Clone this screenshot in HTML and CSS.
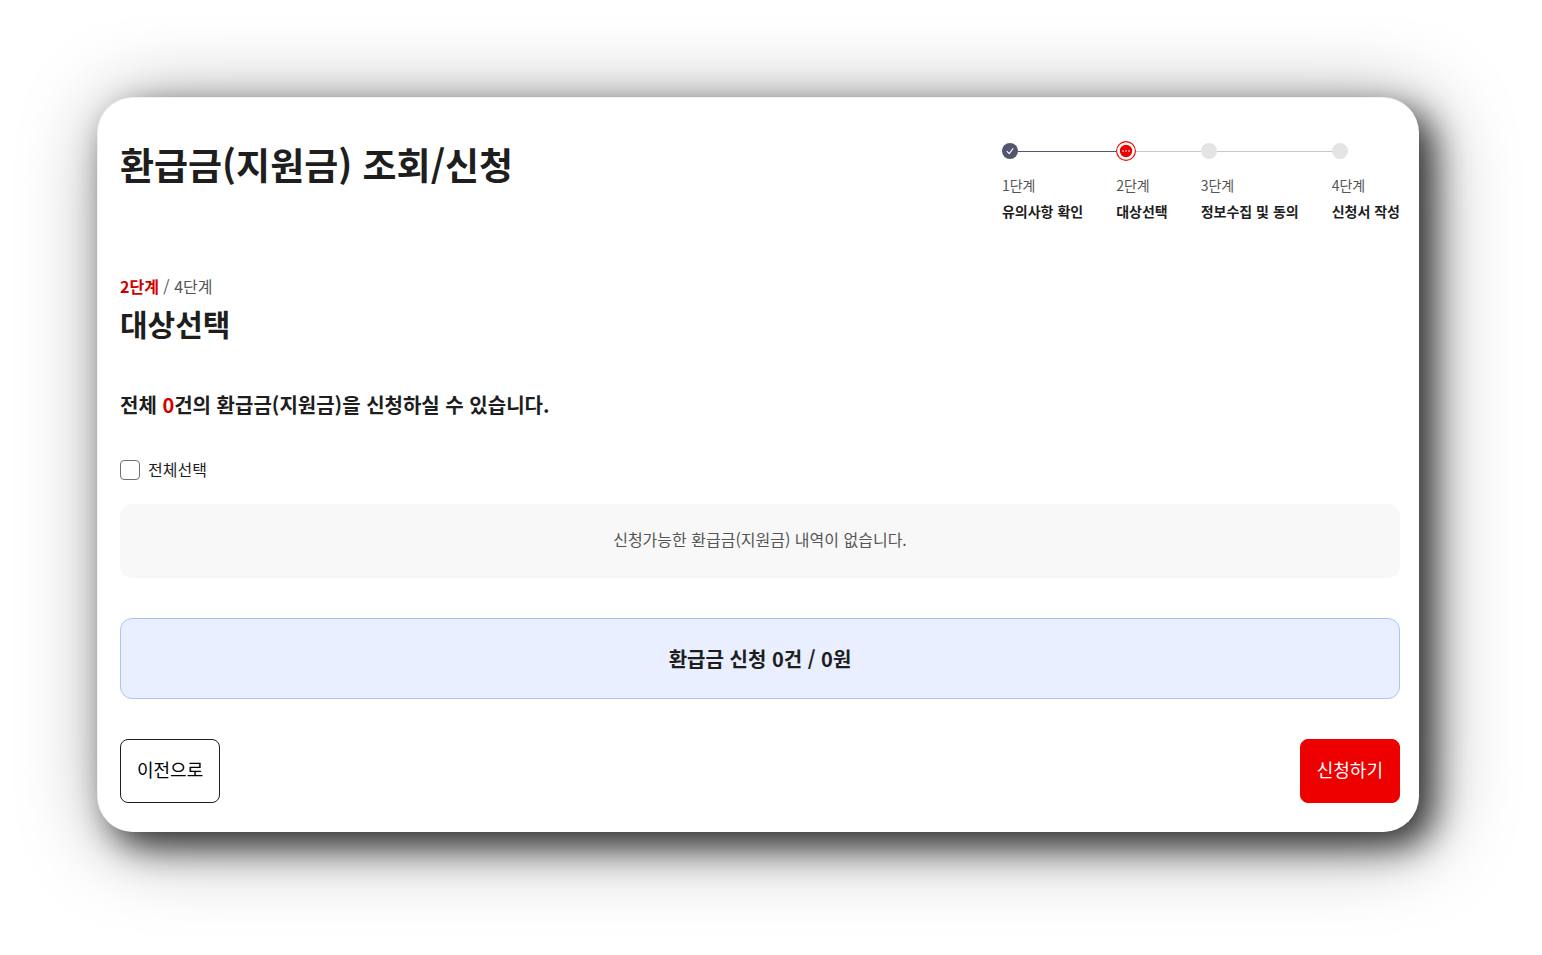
FILE: index.html
```
<!DOCTYPE html>
<html lang="ko">

<head>
    <meta charset="UTF-8">
    <meta name="viewport" content="width=device-width, initial-scale=1.0">
    <title>환급금(지원금) 조회/신청</title>
    <link rel="stylesheet" href="styles.css">
</head>

<body>
    <main class="card">
        <header class="head">
            <h1>환급금(지원금) 조회/신청</h1>
            <ol class="steps">
                <li class="step done">
                    <div class="track">
                        <svg class="dot" width="16" height="16" viewBox="0 0 16 16">
                            <circle cx="8" cy="8" r="8" fill="#52556d" />
                            <path d="M4.8 8.2 7.2 10.7 11.2 5.4" fill="none" stroke="#fff" stroke-width="1.1" />
                        </svg>
                    </div>
                    <span class="num">1단계</span>
                    <strong>유의사항 확인</strong>
                </li>
                <li class="step active">
                    <div class="track">
                        <svg class="dot" width="20" height="20" viewBox="0 0 20 20">
                            <circle cx="10" cy="10" r="9.4" fill="#fff" stroke="#e00" stroke-width="1.1" />
                            <circle cx="10" cy="10" r="6.2" fill="#e00" />
                            <path d="M6.2 9.2h1.7v1.6H6.2zM9.2 9.2h1.7v1.6H9.2zM12.2 9.2h1.7v1.6h-1.7z" fill="#fff" opacity=".8" />
                        </svg>
                    </div>
                    <span class="num">2단계</span>
                    <strong>대상선택</strong>
                </li>
                <li class="step">
                    <div class="track"><span class="dot"></span></div>
                    <span class="num">3단계</span>
                    <strong>정보수집 및 동의</strong>
                </li>
                <li class="step">
                    <div class="track"><span class="dot"></span></div>
                    <span class="num">4단계</span>
                    <strong>신청서 작성</strong>
                </li>
            </ol>
        </header>

        <p class="progress"><b>2단계</b> / 4단계</p>
        <h2>대상선택</h2>

        <p class="total">전체 <em>0</em>건의 환급금(지원금)을 신청하실 수 있습니다.</p>

        <!-- 전체선택 -->
        <div class="check">
            <input type="checkbox" id="check-all">
            <label for="check-all">전체선택</label>
        </div>

        <div class="empty">신청가능한 환급금(지원금) 내역이 없습니다.</div>
        <div class="summary">환급금 신청 0건 / 0원</div>

        <!-- 버튼 -->
        <div class="btns">
            <button type="button" class="btn prev">이전으로</button>
            <button type="button" class="btn apply">신청하기</button>
        </div>
    </main>
</body>

</html>
```
FILE: styles.css
```
* {
    box-sizing: border-box;
}

body {
    min-height: 100vh;
    margin: 0;
    padding: 97px 123px 97px 97px;
    background-color: #fff;
    color: #1e1e1e;
    font-family: "Noto Sans CJK KR", sans-serif;
    font-size: 16px;
    line-height: 24px;
}

h1,
h2,
p,
ol {
    margin: 0;
    padding: 0;
}

.card {
    padding: 39px 18px 28px 22px;
    border: 1px solid #f0f0f0;
    border-right-color: #fff;
    border-bottom-color: #fff;
    border-radius: 36px;
    background-color: #fff;
    box-shadow: 14px 14px 35px rgba(0, 0, 0, 0.75), 10px 10px 85px rgba(0, 0, 0, 0.4);
}

.head {
    display: flex;
    justify-content: space-between;
    align-items: flex-start;
    margin-bottom: 50px;
}

h1 {
    font-size: 37px;
    line-height: 54px;
}

h2 {
    margin-bottom: 42px;
    font-size: 30px;
    line-height: 50px;
}

/* 단계 표시 */
.steps {
    display: flex;
    gap: 33px;
    padding-top: 4px;
    list-style: none;
}

.step {
    font-size: 14px;
    line-height: 26px;
}

.step strong {
    display: block;
}

.num {
    display: block;
    color: #555;
}

.track {
    display: flex;
    align-items: center;
    height: 20px;
    margin-right: -33px;
    margin-bottom: 11px;
}

.track::after {
    content: "";
    flex: 1;
    height: 1px;
    background-color: #c6c6c6;
}

.done .track::after {
    background-color: #52556d;
}

.step:last-child .track::after {
    display: none;
}

.dot {
    flex: none;
}

span.dot {
    width: 16px;
    height: 16px;
    border-radius: 50%;
    background-color: #e4e4e4;
}

.progress {
    color: #555;
}

.progress b,
.total em {
    color: #d00000;
    font-style: normal;
}

.total {
    margin-bottom: 40px;
    font-size: 20px;
    font-weight: bold;
    line-height: 30px;
}

.check {
    display: flex;
    align-items: center;
    gap: 8px;
    height: 20px;
    margin-bottom: 24px;
}

.check input {
    appearance: none;
    width: 20px;
    height: 20px;
    margin: 0;
    border: 1px solid #717171;
    border-radius: 4px;
    background-color: #fff;
}

.check label {
    padding-bottom: 2px;
}

.empty {
    margin-bottom: 40px;
    padding: 23px 24px 27px;
    border-radius: 12px;
    background-color: #f8f8f8;
    color: #555;
    text-align: center;
}

.summary {
    margin-bottom: 40px;
    padding: 24px;
    border: 1px solid #a8c5f5;
    border-radius: 12px;
    background-color: #e9effe;
    font-size: 20px;
    font-weight: bold;
    line-height: 31px;
    text-align: center;
}

.btns {
    display: flex;
    justify-content: space-between;
}

.btn {
    min-width: 100px;
    height: 64px;
    padding: 0 16px 4px;
    border: 1px solid #1e1e1e;
    border-radius: 8px;
    background-color: #fff;
    color: #000;
    font-family: inherit;
    font-size: 18px;
}

.apply {
    border-color: #e00;
    background-color: #e00;
    color: #fff;
}
```
